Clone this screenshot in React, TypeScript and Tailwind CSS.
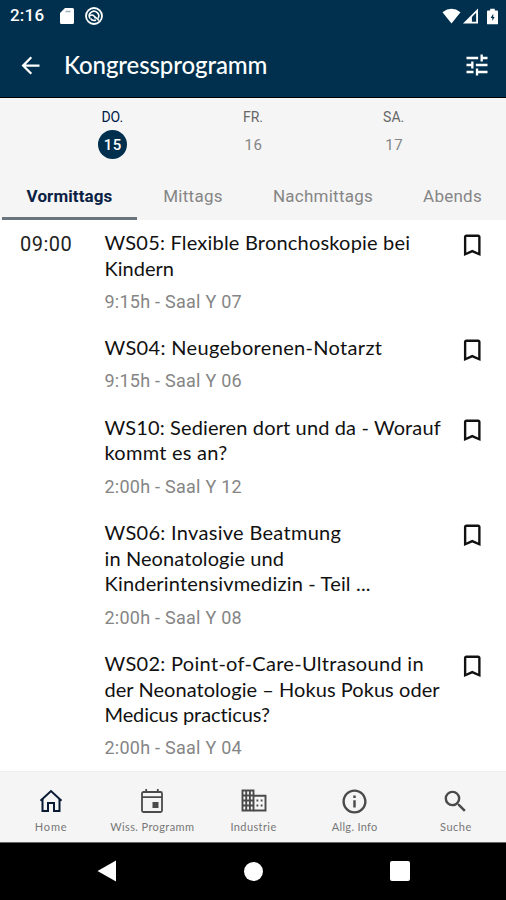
import { useState } from "react";
import {
  MdArrowBack,
  MdOutlineBookmarkBorder,
  MdOutlineInfo,
  MdSearch,
  MdTune,
} from "react-icons/md";

type Line = { text: string; spacing: string };
type Session = { id: string; lines: Line[]; info: string };

const days = [
  { name: "DO.", date: "15" },
  { name: "FR.", date: "16" },
  { name: "SA.", date: "17" },
];

const periods = [
  { name: "Vormittags", width: "w-[138px]" },
  { name: "Mittags", width: "w-[109px]" },
  { name: "Nachmittags", width: "w-[151px]" },
  { name: "Abends", width: "w-[108px]" },
];

const sessions: Session[] = [
  {
    id: "ws05",
    lines: [
      { text: "WS05: Flexible Bronchoskopie bei", spacing: "tracking-[0.2px]" },
      { text: "Kindern", spacing: "tracking-[0px]" },
    ],
    info: "9:15h - Saal Y 07",
  },
  {
    id: "ws04",
    lines: [{ text: "WS04: Neugeborenen-Notarzt", spacing: "tracking-[0.33px]" }],
    info: "9:15h - Saal Y 06",
  },
  {
    id: "ws10",
    lines: [
      { text: "WS10: Sedieren dort und da - Worauf", spacing: "tracking-[0.13px]" },
      { text: "kommt es an?", spacing: "tracking-[0.25px]" },
    ],
    info: "2:00h - Saal Y 12",
  },
  {
    id: "ws06",
    lines: [
      { text: "WS06: Invasive Beatmung", spacing: "tracking-[0.3px]" },
      { text: "in Neonatologie und", spacing: "tracking-[0.1px]" },
      { text: "Kinderintensivmedizin - Teil ...", spacing: "tracking-[0.18px]" },
    ],
    info: "2:00h - Saal Y 08",
  },
  {
    id: "ws02",
    lines: [
      { text: "WS02: Point-of-Care-Ultrasound in", spacing: "tracking-[0.3px]" },
      { text: "der Neonatologie – Hokus Pokus oder", spacing: "tracking-[0.05px]" },
      { text: "Medicus practicus?", spacing: "tracking-[-0.1px]" },
    ],
    info: "2:00h - Saal Y 04",
  },
];

function HomeIcon() {
  return (
    <svg viewBox="0 0 24 24" className="size-6" fill="none" stroke="currentColor" strokeWidth="2">
      <path d="M1.5 11.7L12 2l10.5 9.7" />
      <path d="M3.5 10v12h5.500v-8h6v8h5.500V10" />
    </svg>
  );
}

function CalendarIcon() {
  return (
    <svg viewBox="0 0 24 26" className="h-[26px] w-6" fill="none" stroke="currentColor" strokeWidth="1.8">
      <rect x="2" y="4" width="20" height="20" rx="1.5" />
      <path d="M2 9.2h20M6.2 1v3M17.8 1v3" />
      <rect x="12.5" y="14" width="6" height="6" fill="currentColor" stroke="none" />
    </svg>
  );
}

function BuildingIcon() {
  return (
    <svg viewBox="0 0 26 24" className="h-6 w-[26px]" fill="none" stroke="currentColor" strokeWidth="1.9">
      <path d="M1.5 1.5h11v20h-11zM1.5 6.5h11M1.5 11.5h11M1.5 16.5h11M5.2 1.5v20M8.9 1.5v20" />
      <path d="M12.5 6.8h12v14.7h-12" />
      <path d="M15.5 11.5h1.8M19.7 11.5h1.8M15.5 16.5h1.8M19.7 16.5h1.8" />
    </svg>
  );
}

function StatusBar() {
  return (
    <div className="flex h-8 items-center justify-between pl-[10px] pr-[8px] text-white">
      <div className="flex items-center">
        <span className="w-[50px] text-[17px] font-medium tracking-[0.2px]">2:16</span>
        <svg viewBox="0 0 14 16" className="h-4 w-[14px]">
          <path d="M5 0h7.5A1.5 1.5 0 0 1 14 1.5v13a1.5 1.5 0 0 1-1.5 1.5h-11A1.5 1.5 0 0 1 0 14.5V5z" fill="currentColor" />
          <path d="M5.5 3.500h5" stroke="#9fb0bd" strokeWidth="1.5" />
        </svg>
        <svg viewBox="0 0 20 20" className="ml-[10px] size-5" fill="none" stroke="currentColor">
          <circle cx="10" cy="10" r="8" strokeWidth="1.8" />
          <path d="M6 12.5A4.7 4.7 0 1 1 14 12.5" strokeWidth="1.6" />
          <path d="M5.5 10c2.5-2 5-1 6 2.500M9.5 9.5l5.5 5M6.500 12.500c1.500 2 3.500 2.500 5.500 1.500" strokeWidth="1.6" />
        </svg>
      </div>
      <div className="flex items-center">
        <svg viewBox="0 0 20 16" className="h-4 w-[19px]" fill="currentColor">
          <path d="M0.5 4Q10-3.3 19.5 4L10 16z" />
        </svg>
        <svg viewBox="0 0 17 17" className="ml-px h-4 w-[17px]">
          <path d="M0.5 16.5L16.5 0.5v16z" fill="currentColor" />
          <path d="M10 9.5l4.500-4.500v9.500H10z" fill="#00304d" />
        </svg>
        <svg viewBox="0 0 12 17" className="ml-2 h-[17px] w-[11px]">
          <path d="M3.5 0h5v2H11a1 1 0 0 1 1 1v13a1 1 0 0 1-1 1H1a1 1 0 0 1-1-1V3a1 1 0 0 1 1-1h2.5z" fill="currentColor" />
          <path d="M6.8 5.5L4 10h1.8v3.5L8.3 9H6.8z" fill="#00304d" />
        </svg>
      </div>
    </div>
  );
}

export default function App() {
  const [day, setDay] = useState(0);
  const [period, setPeriod] = useState(0);
  const [tab, setTab] = useState(0);

  const tabs = [
    { name: "Home", icon: <HomeIcon />, spacing: "tracking-[0.8px]" },
    { name: "Wiss. Programm", icon: <CalendarIcon />, spacing: "tracking-[0.4px]" },
    { name: "Industrie", icon: <BuildingIcon />, spacing: "tracking-[0.4px]" },
    { name: "Allg. Info", icon: <MdOutlineInfo className="size-[29px]" />, spacing: "tracking-[0.3px]" },
    { name: "Suche", icon: <MdSearch className="size-[29px]" />, spacing: "tracking-[0.5px]" },
  ];

  return (
    <div className="flex h-[900px] w-[506px] flex-col overflow-hidden bg-white font-['Roboto',sans-serif]">
      <header className="h-[98px] shrink-0 border-b border-black bg-[#00304d]">
        <StatusBar />
        <div className="flex h-[66px] items-center pl-[17px] pr-[15px] text-white">
          <MdArrowBack className="size-[27px]" />
          <h1 className="ml-5 flex-1 whitespace-nowrap font-['Lato',sans-serif] text-[24px] font-medium tracking-[-0.1px]">
            Kongressprogramm
          </h1>
          <MdTune className="size-7" />
        </div>
      </header>

      <section className="h-[122px] shrink-0 bg-[#f5f5f5]">
        <div className="flex h-[75px] px-[42px]">
          {days.map((item, i) => (
            <button key={item.name} type="button" onClick={() => setDay(i)} className="flex flex-1 flex-col items-center pt-[9px]">
              <span className={`text-[14px] leading-5 ${i === day ? "text-[#00204a]" : "text-[#666]"}`}>{item.name}</span>
              <span
                className={`mt-[3px] flex size-[29px] items-center justify-center rounded-full pl-px pt-px text-[15px] tracking-[0.5px] ${
                  i === day ? "bg-[#00304d] font-medium text-white" : "text-[#858585]"
                }`}
              >
                {item.date}
              </span>
            </button>
          ))}
        </div>
        <div className="flex h-[47px]">
          {periods.map((item, i) => (
            <button
              key={item.name}
              type="button"
              onClick={() => setPeriod(i)}
              className={`${item.width} flex shrink-0 flex-col items-center text-[17px] ${
                i === period ? "font-bold tracking-[0.1px] text-[#0a1f44]" : "tracking-[0.25px] text-[#858585]"
              }`}
            >
              <span className="flex h-[44px] items-center pl-px pt-[3px]">{item.name}</span>
              {i === period && <span className="h-[3px] w-[135px] shrink-0 bg-[#69747c]" />}
            </button>
          ))}
        </div>
      </section>

      <main className="flex h-[551px] shrink-0 overflow-hidden pt-[10px]">
        <time className="w-[104.5px] shrink-0 pl-[20px] text-[20px] leading-[29px] tracking-[0.5px] text-[#222]">09:00</time>
        <div className="flex-1">
          {sessions.map((session) => (
            <article key={session.id} className="flex pb-[21.3px]">
              <div className="w-[353.5px]">
                <h2 className="font-['Lato',sans-serif] text-[20px] leading-[25.7px] text-[#111]">
                  {session.lines.map((line) => (
                    <span key={line.text} className="block whitespace-nowrap">
                      <span className={line.spacing}>{line.text}</span>
                    </span>
                  ))}
                </h2>
                <p className="mt-[8.5px] text-[18px] leading-6 tracking-[0.25px] text-[#858585]">{session.info}</p>
              </div>
              <MdOutlineBookmarkBorder className="mt-px size-[28.5px] text-[#111]" />
            </article>
          ))}
        </div>
      </main>

      <nav className="flex h-[71px] shrink-0 border-t border-[#eee] bg-[#f5f5f5]">
        {tabs.map((item, i) => (
          <button
            key={item.name}
            type="button"
            onClick={() => setTab(i)}
            className={`flex flex-1 flex-col items-center pt-[14px] ${i === tab ? "text-[#0a1a35]" : "text-[#4a4a4a]"}`}
          >
            <span className="flex h-[30px] items-center pl-px">{item.icon}</span>
            <span className={`mt-[3px] whitespace-nowrap pl-px font-['Lato',sans-serif] text-[11px] leading-4 text-[#777] ${item.spacing}`}>
              {item.name}
            </span>
          </button>
        ))}
      </nav>

      <footer className="flex flex-1 items-center border-t border-[#666] bg-black px-[33px] pb-px text-white">
        <div className="flex flex-1 justify-center">
          <svg viewBox="0 0 19 22" className="h-[22px] w-[19px]" fill="currentColor">
            <path d="M19 0.5v21L0.5 11z" />
          </svg>
        </div>
        <div className="flex flex-1 justify-center">
          <span className="size-[19px] rounded-full bg-white" />
        </div>
        <div className="flex flex-1 justify-center">
          <span className="size-5 rounded-[2px] bg-white" />
        </div>
      </footer>
    </div>
  );
}
